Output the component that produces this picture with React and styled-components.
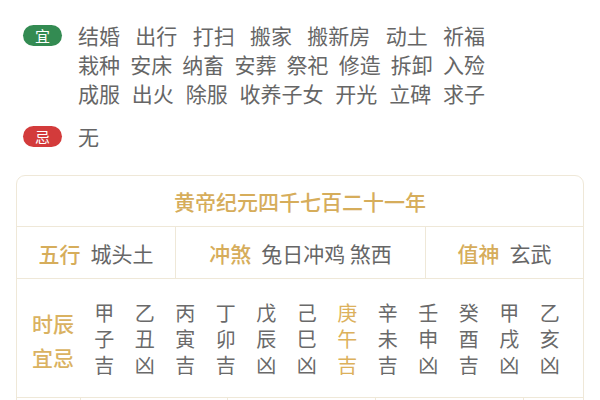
import React from 'react';
import styled, { createGlobalStyle } from 'styled-components';

const GlobalStyle = createGlobalStyle`
  html, body {
    margin: 0;
    padding: 0;
    background: #ffffff;
  }
  body {
    font-family: "Noto Sans CJK SC", "Noto Sans", sans-serif;
    color: #666666;
  }
`;

const Page = styled.div`
  width: 600px;
  height: 400px;
  overflow: hidden;
  padding-top: 21px;
  box-sizing: border-box;
`;

const Section = styled.div`
  display: flex;
  align-items: flex-start;
  padding-left: 23px;
  margin-bottom: ${props => props.gap || 0}px;
`;

const BadgeSlot = styled.div`
  height: 29px;
  display: flex;
  align-items: center;
  margin-right: 16px;
`;

const Badge = styled.span`
  display: inline-flex;
  align-items: center;
  justify-content: center;
  width: 39px;
  height: 21px;
  border-radius: 11px;
  background: ${props => props.bad ? '#d33b3b' : '#338b52'};
  color: #ffffff;
  font-size: 15px;
  line-height: 1;
`;

const Items = styled.div`
  width: 407px;
  display: flex;
  flex-direction: column;
`;

const ItemLine = styled.div`
  display: flex;
  justify-content: space-between;
  font-size: 21px;
  line-height: 29px;
  height: 29px;
  white-space: nowrap;
`;

const Table = styled.div`
  margin: 0 16px;
  border: 1px solid #efe8d8;
  border-radius: 9px;
  overflow: hidden;
`;

const TitleRow = styled.div`
  height: 50px;
  display: flex;
  align-items: center;
  justify-content: center;
  font-size: 21px;
  font-weight: 500;
  color: #d6ad5b;
  border-bottom: 1px solid #efe8d8;
`;

const InfoRow = styled.div`
  display: grid;
  grid-template-columns: 158px 250px 1fr;
  height: 51px;
  border-bottom: 1px solid #efe8d8;
`;

const InfoCell = styled.div`
  display: flex;
  align-items: center;
  justify-content: center;
  gap: 10px;
  font-size: 21px;
  border-left: ${props => props.first ? 'none' : '1px solid #efe8d8'};
`;

const Label = styled.span`
  color: #d6ad5b;
  font-weight: 500;
`;

const HourRow = styled.div`
  display: flex;
  align-items: center;
  height: 118px;
  padding-left: 15px;
  border-bottom: 1px solid #efe8d8;
`;

const HourLabel = styled.div`
  width: 52px;
  display: flex;
  flex-direction: column;
  font-size: 21px;
  line-height: 34px;
  font-weight: 500;
  color: #dab261;
  margin-top: 3px;
`;

const HourGrid = styled.div`
  display: grid;
  grid-template-columns: repeat(12, 40.5px);
  margin-top: 1px;
`;

const HourCol = styled.div`
  display: flex;
  flex-direction: column;
  align-items: center;
  font-size: 20px;
  line-height: 26px;
  color: ${props => props.active ? '#dcb15c' : '#6a6a6a'};
`;

const BottomRow = styled.div`
  display: grid;
  grid-template-columns: 63px 147px 148px 148px 1fr;
  height: 50px;
`;

const BottomCell = styled.div`
  border-left: ${props => props.first ? 'none' : '1px solid #efe8d8'};
`;

const goodLines = [
  ['结婚', '出行', '打扫', '搬家', '搬新房', '动土', '祈福'],
  ['栽种', '安床', '纳畜', '安葬', '祭祀', '修造', '拆卸', '入殓'],
  ['成服', '出火', '除服', '收养子女', '开光', '立碑', '求子'],
];

const hours = [
  ['甲', '子', '吉'],
  ['乙', '丑', '凶'],
  ['丙', '寅', '吉'],
  ['丁', '卯', '吉'],
  ['戊', '辰', '凶'],
  ['己', '巳', '凶'],
  ['庚', '午', '吉'],
  ['辛', '未', '吉'],
  ['壬', '申', '凶'],
  ['癸', '酉', '吉'],
  ['甲', '戌', '凶'],
  ['乙', '亥', '凶'],
];

const App = () => {
  return (
    <Page>
      <GlobalStyle />
      <Section gap={14}>
        <BadgeSlot>
          <Badge>宜</Badge>
        </BadgeSlot>
        <Items>
          {goodLines.map((line, i) => (
            <ItemLine key={i}>
              {line.map(word => <span key={word}>{word}</span>)}
            </ItemLine>
          ))}
        </Items>
      </Section>

      <Section gap={24}>
        <BadgeSlot>
          <Badge bad>忌</Badge>
        </BadgeSlot>
        <Items>
          <ItemLine>无</ItemLine>
        </Items>
      </Section>

      <Table>
        <TitleRow>黄帝纪元四千七百二十一年</TitleRow>
        <InfoRow>
          <InfoCell first>
            <Label>五行</Label>
            <span>城头土</span>
          </InfoCell>
          <InfoCell>
            <Label>冲煞</Label>
            <span>兔日冲鸡 煞西</span>
          </InfoCell>
          <InfoCell>
            <Label>值神</Label>
            <span>玄武</span>
          </InfoCell>
        </InfoRow>
        <HourRow>
          <HourLabel>
            <span>时辰</span>
            <span>宜忌</span>
          </HourLabel>
          <HourGrid>
            {hours.map((h, i) => (
              <HourCol key={i} active={i === 6}>
                {h.map((c, j) => <span key={j}>{c}</span>)}
              </HourCol>
            ))}
          </HourGrid>
        </HourRow>
        <BottomRow>
          <BottomCell first />
          <BottomCell />
          <BottomCell />
          <BottomCell />
          <BottomCell />
        </BottomRow>
      </Table>
    </Page>
  );
};

export default App;
